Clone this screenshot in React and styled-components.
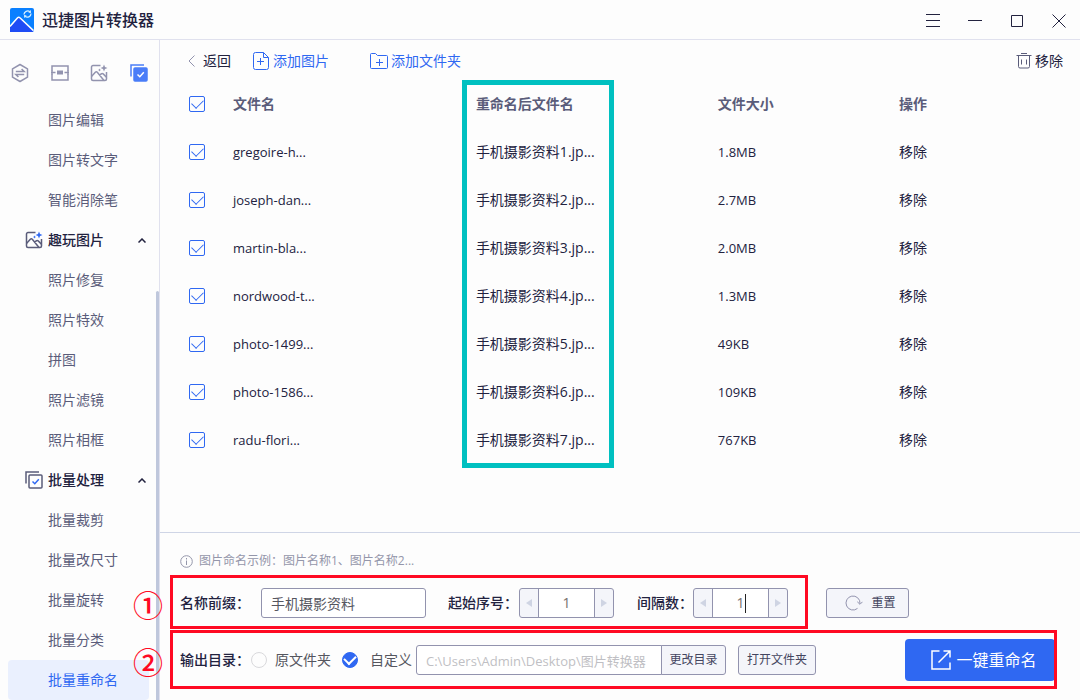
import React, { useState } from "react";
import styled, { createGlobalStyle, css } from "styled-components";

const blue = "#2f68f2";
const ink = "#22223f";
const slate = "#5a5c7a";
const line = "#e0e1ee";
const edge = "#9293ae";
const red = "#ff0a23";

const GlobalStyle = createGlobalStyle`
  * { box-sizing: border-box; }
  body {
    margin: 0;
    background: #fdfdfd;
    color: ${ink};
    font: 14px/20px "Open Sans", "Noto Sans CJK SC", sans-serif;
  }
  button, input { font: inherit; color: inherit; }
  button { background: none; border: 0; padding: 0; cursor: pointer; }
  a { color: inherit; text-decoration: none; }
  svg { display: block; flex: none; }
`;

const Window = styled.div`
  display: flex;
  flex-direction: column;
  min-height: 100vh;
`;

const TitleBar = styled.header`
  display: flex;
  align-items: center;
  height: 40px;
  padding-left: 10px;
  border-bottom: 1px solid ${line};
`;

const AppName = styled.h1`
  flex: 1;
  margin: 0 0 0 8px;
  font-size: 16px;
  line-height: 24px;
  font-weight: 500;
`;

const WindowButton = styled.button`
  display: grid;
  place-items: center;
  width: 42px;
  height: 39px;
  padding-top: 2px;
`;

const Body = styled.div`
  display: flex;
  flex: 1;
`;

const Sidebar = styled.nav`
  position: relative;
  flex: none;
  width: 160px;
  border-right: 1px solid ${line};
`;

const SideTabs = styled.div`
  display: grid;
  grid-template-columns: repeat(4, 1fr);
  height: 60px;
  padding-top: 6px;
`;

const SideTab = styled.button`
  display: grid;
  place-items: center;
`;

const SideLink = styled.a`
  display: flex;
  align-items: center;
  height: 40px;
  margin: 0 10px 0 8px;
  padding-left: 40px;
  border-radius: 4px;
  color: ${(p) => (p.$active ? blue : slate)};
  background: ${(p) => (p.$active ? "#eaf0fe" : "transparent")};
`;

const SideGroup = styled.button`
  display: flex;
  align-items: center;
  gap: 5px;
  width: 100%;
  height: 40px;
  padding: 0 13px 0 25px;
  font-weight: 500;
`;

const GroupName = styled.span`
  flex: 1;
  text-align: left;
`;

const ScrollThumb = styled.div`
  position: absolute;
  top: 38%;
  right: 0;
  bottom: 0;
  width: 3px;
  border-radius: 2px 2px 0 0;
  background: #bfc7dc;
`;

const Main = styled.main`
  display: flex;
  flex-direction: column;
  flex: 1;
  min-width: 0;
`;

const Toolbar = styled.div`
  display: flex;
  align-items: center;
  height: 40px;
  padding: 2px 17px 0 28px;
`;

const ToolButton = styled.button`
  display: flex;
  align-items: center;
  gap: ${(p) => p.$gap || 4}px;
  margin-right: ${(p) => p.$after || 0}px;
  color: ${(p) => (p.$accent ? blue : ink)};
`;

const Spacer = styled.div`
  flex: 1;
`;

const TableArea = styled.section`
  flex: 1;
`;

const FileTable = styled.table`
  width: 100%;
  table-layout: fixed;
  border-collapse: collapse;
  text-align: left;
`;

const Col = styled.col`
  width: ${(p) => p.$width};
`;

const cell = css`
  height: 48px;
  padding: 0;
  vertical-align: middle;
`;

const HeadCell = styled.th`
  ${cell}
  position: relative;
  color: ${slate};
  font-weight: 700;
`;

const Cell = styled.td`
  ${cell}
  font-size: ${(p) => (p.$latin ? 13 : 14)}px;
`;

const CheckCell = styled.td`
  ${cell}
  padding-left: 29px;
`;

const ColumnHighlight = styled.div`
  position: absolute;
  top: 0;
  left: -14px;
  width: 152px;
  height: calc(800% + 4px);
  border: 5px solid #00c0c0;
  pointer-events: none;
`;

const Checkbox = styled.input`
  appearance: none;
  display: grid;
  place-items: center;
  width: 16px;
  height: 16px;
  margin: 0;
  border: 1px solid ${blue};
  border-radius: 2px;

  &:checked::after {
    content: "";
    width: 6px;
    height: 10px;
    margin-top: -3px;
    border: solid ${blue};
    border-width: 0 1px 1px 0;
    transform: rotate(45deg);
  }
`;

const Footer = styled.footer`
  padding: 18px 23px 10px 10px;
  border-top: 1px solid #cfd5e6;
`;

const Hint = styled.p`
  display: flex;
  align-items: center;
  gap: 6px;
  margin: 0 0 4px;
  padding-left: 10px;
  font-size: 12px;
  color: #9496aa;
`;

const NamingRow = styled.div`
  display: flex;
  align-items: center;
  gap: 18px;
`;

const Marked = styled.div`
  position: relative;
  display: flex;
  align-items: center;
  height: ${(p) => p.$height}px;
  padding: 0 ${(p) => p.$right}px 0 10px;
`;

const MarkFrame = styled.div`
  position: absolute;
  inset: 0 0 1px;
  border: 3px solid ${red};
  pointer-events: none;
`;

const MarkNumber = styled.span`
  position: absolute;
  left: -37px;
  top: calc(50% - 14px);
  font: 500 30px/30px "Noto Sans CJK SC", sans-serif;
  color: ${red};
`;

const FieldLabel = styled.label`
  flex: none;
  width: ${(p) => p.$width}px;
  font-weight: 500;
`;

const TextField = styled.input`
  width: ${(p) => p.$width}px;
  height: 30px;
  margin: 0 ${(p) => p.$after || 0}px 0 0;
  padding: 0 9px;
  border: 1px solid ${edge};
  border-radius: ${(p) => (p.$joined ? "3px 0 0 3px" : "3px")};
  background: #fff;
  color: ${(p) => (p.$muted ? "#bfbfc4" : "#55565f")};
  font-size: ${(p) => (p.$muted ? 13 : 14)}px;
`;

const Stepper = styled.div`
  position: relative;
  display: flex;
  width: 95px;
  height: 30px;
  margin-right: ${(p) => p.$after || 0}px;
  border: 1px solid ${edge};
  border-radius: 3px;
  background: #f4f5fa;
`;

const StepButton = styled.button`
  display: grid;
  place-items: center;
  width: 18px;
`;

const StepValue = styled.input`
  flex: 1;
  min-width: 0;
  padding: 0;
  border: solid ${edge};
  border-width: 0 1px;
  border-radius: 0;
  background: #fff;
  color: #77706c;
  text-align: center;
`;

const Caret = styled.span`
  position: absolute;
  top: 5px;
  left: calc(50% + 4px);
  width: 1px;
  height: 19px;
  background: #222;
`;

const SmallButton = styled.button`
  display: flex;
  align-items: center;
  justify-content: center;
  gap: 8px;
  flex: none;
  width: ${(p) => p.$width}px;
  height: 30px;
  margin-left: ${(p) => (p.$joined ? -1 : p.$before || 0)}px;
  padding-left: ${(p) => p.$indent || 0}px;
  border: 1px solid ${edge};
  border-radius: ${(p) => (p.$joined ? "0 3px 3px 0" : "3px")};
  background: #f4f5fa;
  color: #44455f;
  font-size: 12px;
`;

const RadioLabel = styled.label`
  display: flex;
  align-items: center;
  flex: none;
  gap: ${(p) => p.$gap}px;
  margin-right: ${(p) => p.$after}px;
  color: #55565f;
`;

const Radio = styled.input`
  appearance: none;
  display: grid;
  place-items: center;
  width: 16px;
  height: 16px;
  margin: 0;
  border: 1px solid #d9d9dc;
  border-radius: 50%;

  &:checked {
    border-color: ${blue};
    background: ${blue};
  }
  &:checked::after {
    content: "";
    width: 6px;
    height: 9px;
    margin-top: -3px;
    border: solid #fff;
    border-width: 0 2px 2px 0;
    transform: rotate(45deg);
  }
`;

const PrimaryButton = styled.button`
  display: flex;
  align-items: center;
  justify-content: center;
  gap: 5px;
  flex: none;
  width: 150px;
  height: 42px;
  padding-left: 8px;
  border-radius: 4px;
  background: ${blue};
  color: #fff;
  font-size: 16px;
`;

const Icon = ({ w, h = w, color = "currentColor", sw = 1, children }) => (
  <svg width={w} height={h} viewBox={`0 0 ${w} ${h}`} fill="none" stroke={color} strokeWidth={sw} aria-hidden="true">
    {children}
  </svg>
);

const Logo = () => (
  <svg width="24" height="24" viewBox="0 0 24 24" fill="none" aria-hidden="true">
    <rect width="24" height="24" rx="2" fill="#0a80ff" />
    <path d="M0 18 9 9l14 13v2H0z" fill="#1f4cf5" />
    <path d="M0 18.5 7.6 9.8q1.1-1.2 2.3 0L23.5 22.6" stroke="#fff" strokeWidth="1.5" />
    <path d="M14 6.500a3.600 3.600 0 0 1 6-2.600M21 5.500a3.600 3.600 0 0 1-6 2.700" stroke="#d6f0ff" strokeWidth="1.3" />
    <path d="m20.800 1.900.2 3-2.700-.5zM14.200 10.100l-.2-3 2.700.5z" fill="#d6f0ff" />
  </svg>
);

const SwapIcon = () => (
  <Icon w={18} h={20} color="#9293ae" sw={1.5}>
    <path d="M9 1.500 16.500 5.800v8.400L9 18.500 1.500 14.200V5.800z" strokeLinejoin="round" />
    <path d="M4.800 8.600h8.400L10.600 6M13.200 11.400H4.800L7.400 14" />
  </Icon>
);

const CompressIcon = () => (
  <Icon w={18} h={16} color="#9293ae" sw={1.5}>
    <path d="M1 5.500V1h16v4.500M1 9.500V15h16V9.500" />
    <path d="M0 7.500h4.500M13.500 7.500H18M1 5v5M17 5v5" />
    <path d="M6 7.500h6" strokeWidth="4" />
  </Icon>
);

const PhotoIcon = ({ color, star }) => (
  <Icon w={18} h={18} color={color} sw={1.5}>
    <path d="M10.500 1.500H3A1.500 1.500 0 0 0 1.500 3v12A1.500 1.500 0 0 0 3 16.500h12a1.500 1.500 0 0 0 1.500-1.500V8" />
    <path d="M1.500 12.500 5.300 8.300q1-1 2 0L14 16.500M9.500 11.500l1.700-1.600q1-.9 2 0l3.300 3.400" />
    <path d="m14 .5 1 2.500 2.500 1-2.500 1-1 2.500-1-2.500-2.500-1L13 3zM9.500 4.500l.5 1 1 .5-1 .5-.5 1-.5-1-1-.5 1-.5z" fill={star} stroke="none" />
  </Icon>
);

const BatchIcon = ({ solid }) => (
  <Icon w={18} h={18} color={solid ? "#4a7df8" : "#5a5c7a"} sw={1.5}>
    <path d="M1 12.500V1h13" />
    <rect x="4" y="4" width="13" height="13" rx="1" fill={solid ? "#4a7df8" : "none"} />
    <path d="m7.500 10.500 2.300 2.200 4-4.400" stroke={solid ? "#fff" : blue} />
  </Icon>
);

const BackIcon = () => <Icon w={7} h={12} color="#9293ae"><path d="M6.500.5 1 6l5.500 5.500" /></Icon>;

const AddImageIcon = () => (
  <Icon w={16} h={18}>
    <path d="M10.500.5h-8a2 2 0 0 0-2 2v13a2 2 0 0 0 2 2h11a2 2 0 0 0 2-2V5.500zM10.500.5v5h5" />
    <path d="M7.500 6v7M4 9.500h7" />
  </Icon>
);

const AddFolderIcon = () => (
  <Icon w={18} h={16}>
    <path d="M.5 14.500v-13a1 1 0 0 1 1-1h4l2 2h9a1 1 0 0 1 1 1v11a1 1 0 0 1-1 1h-15a1 1 0 0 1-1-1z" />
    <path d="M9.500 6v7M6 9.500h7" />
  </Icon>
);

const TrashIcon = () => (
  <Icon w={16} h={16} color={slate}>
    <path d="M.5 2.500h15M5 .5h6M2.500 2.500v11a1.500 1.500 0 0 0 1.500 1.500h8a1.500 1.500 0 0 0 1.500-1.500v-11M5.500 6.500v5M10.500 6.500v5" />
  </Icon>
);

const InfoIcon = () => (
  <Icon w={13}>
    <circle cx="6.5" cy="6.5" r="5.8" />
    <path d="M6.500 3v1.500M6.500 5.500V10" />
  </Icon>
);

const ResetIcon = () => (
  <Icon w={18} h={16} color={edge}>
    <path d="M12.500 13.400A7 7 0 1 1 15 8.500" />
    <path d="m12.300 6.800 2.700 2.500 2.500-2.500" />
  </Icon>
);

const ExportIcon = () => (
  <Icon w={20} sw={1.5}>
    <path d="M8.500 1H1v18h18v-6.500M12.500 1H19v6.500M19 1 7.500 12.500" />
  </Icon>
);

const Arrow = ({ left }) => (
  <Icon w={6} h={8}>
    <path d={left ? "M6 0v8L0 4z" : "M0 0v8l6-4z"} fill="#cfd4e3" stroke="none" />
  </Icon>
);

const navigation = [
  { links: ["图片编辑", "图片转文字", "智能消除笔"] },
  {
    title: "趣玩图片",
    icon: <PhotoIcon color={slate} star={blue} />,
    links: ["照片修复", "照片特效", "拼图", "照片滤镜", "照片相框"],
  },
  {
    title: "批量处理",
    icon: <BatchIcon />,
    links: ["批量裁剪", "批量改尺寸", "批量旋转", "批量分类", "批量重命名"],
  },
];

const files = [
  ["gregoire-h...", "1.8MB"],
  ["joseph-dan...", "2.7MB"],
  ["martin-bla...", "2.0MB"],
  ["nordwood-t...", "1.3MB"],
  ["photo-1499...", "49KB"],
  ["photo-1586...", "109KB"],
  ["radu-flori...", "767KB"],
];

function NumberStepper({ id, after, caret }) {
  const [value, setValue] = useState(1);
  return (
    <Stepper $after={after}>
      <StepButton aria-label="减少" onClick={() => setValue(Math.max(1, value - 1))}><Arrow left /></StepButton>
      <StepValue id={id} value={value} onChange={(e) => setValue(Number(e.target.value) || 1)} />
      <StepButton aria-label="增加" onClick={() => setValue(value + 1)}><Arrow /></StepButton>
      {caret && <Caret />}
    </Stepper>
  );
}

export default function App() {
  return (
    <Window>
      <GlobalStyle />
      <TitleBar>
        <Logo />
        <AppName>迅捷图片转换器</AppName>
        <WindowButton aria-label="菜单"><Icon w={14} h={13}><path d="M0 .5h14M0 6.500h14M0 12.500h14" /></Icon></WindowButton>
        <WindowButton aria-label="最小化"><Icon w={14} h={1}><path d="M0 .5h14" /></Icon></WindowButton>
        <WindowButton aria-label="最大化"><Icon w={12}><path d="M.5.5h11v11H.5z" /></Icon></WindowButton>
        <WindowButton aria-label="关闭"><Icon w={14}><path d="m.5.5 13 13M13.500.5l-13 13" /></Icon></WindowButton>
      </TitleBar>
      <Body>
        <Sidebar>
          <SideTabs>
            <SideTab aria-label="格式转换"><SwapIcon /></SideTab>
            <SideTab aria-label="图片压缩"><CompressIcon /></SideTab>
            <SideTab aria-label="趣玩图片"><PhotoIcon color="#9293ae" star="#9293ae" /></SideTab>
            <SideTab aria-label="批量处理"><BatchIcon solid /></SideTab>
          </SideTabs>
          {navigation.map((group, i) => (
            <React.Fragment key={i}>
              {group.title && (
                <SideGroup>
                  {group.icon}
                  <GroupName>{group.title}</GroupName>
                  <Icon w={8} h={5} sw={1.5}><path d="M.5 4.500 4 1l3.500 3.500" /></Icon>
                </SideGroup>
              )}
              {group.links.map((name) => (
                <SideLink key={name} href="#" $active={name === "批量重命名"}>{name}</SideLink>
              ))}
            </React.Fragment>
          ))}
          <ScrollThumb />
        </Sidebar>
        <Main>
          <Toolbar>
            <ToolButton $gap={8} $after={22}><BackIcon />返回</ToolButton>
            <ToolButton $accent $after={41}><AddImageIcon />添加图片</ToolButton>
            <ToolButton $accent $gap={3}><AddFolderIcon />添加文件夹</ToolButton>
            <Spacer />
            <ToolButton $gap={3}><TrashIcon />移除</ToolButton>
          </Toolbar>
          <TableArea>
            <FileTable>
              <colgroup>
                <Col $width="73px" />
                <Col $width="26.4%" />
                <Col $width="26.3%" />
                <Col $width="19.7%" />
                <Col />
              </colgroup>
              <thead>
                <tr>
                  <CheckCell><Checkbox type="checkbox" defaultChecked aria-label="全选" /></CheckCell>
                  <HeadCell>文件名</HeadCell>
                  <HeadCell>重命名后文件名<ColumnHighlight /></HeadCell>
                  <HeadCell>文件大小</HeadCell>
                  <HeadCell>操作</HeadCell>
                </tr>
              </thead>
              <tbody>
                {files.map(([name, size], i) => (
                  <tr key={name}>
                    <CheckCell><Checkbox type="checkbox" defaultChecked aria-label={name} /></CheckCell>
                    <Cell $latin>{name}</Cell>
                    <Cell>{`手机摄影资料${i + 1}.jp...`}</Cell>
                    <Cell $latin>{size}</Cell>
                    <Cell><button>移除</button></Cell>
                  </tr>
                ))}
              </tbody>
            </FileTable>
          </TableArea>
          <Footer>
            <Hint><InfoIcon />图片命名示例：图片名称1、图片名称2...</Hint>
            <NamingRow>
              <Marked $height={55} $right={20}>
                <FieldLabel htmlFor="prefix" $width={81}>名称前缀：</FieldLabel>
                <TextField id="prefix" defaultValue="手机摄影资料" $width={165} $after={22} />
                <FieldLabel htmlFor="start" $width={71}>起始序号：</FieldLabel>
                <NumberStepper id="start" after={23} />
                <FieldLabel htmlFor="step" $width={56}>间隔数：</FieldLabel>
                <NumberStepper id="step" caret />
                <MarkFrame />
                <MarkNumber>①</MarkNumber>
              </Marked>
              <SmallButton $width={83} $indent={6}><ResetIcon />重置</SmallButton>
            </NamingRow>
            <Marked $height={60} $right={2}>
              <FieldLabel as="span" $width={71}>输出目录：</FieldLabel>
              <RadioLabel $gap={8} $after={11}><Radio type="radio" name="output" />原文件夹</RadioLabel>
              <RadioLabel $gap={12} $after={4}><Radio type="radio" name="output" defaultChecked />自定义</RadioLabel>
              <TextField aria-label="输出目录" readOnly value={"C:\\Users\\Admin\\Desktop\\图片转换器"} $width={246} $muted $joined />
              <SmallButton $width={65} $joined>更改目录</SmallButton>
              <SmallButton $width={78} $before={12}>打开文件夹</SmallButton>
              <Spacer />
              <PrimaryButton><ExportIcon />一键重命名</PrimaryButton>
              <MarkFrame />
              <MarkNumber>②</MarkNumber>
            </Marked>
          </Footer>
        </Main>
      </Body>
    </Window>
  );
}
